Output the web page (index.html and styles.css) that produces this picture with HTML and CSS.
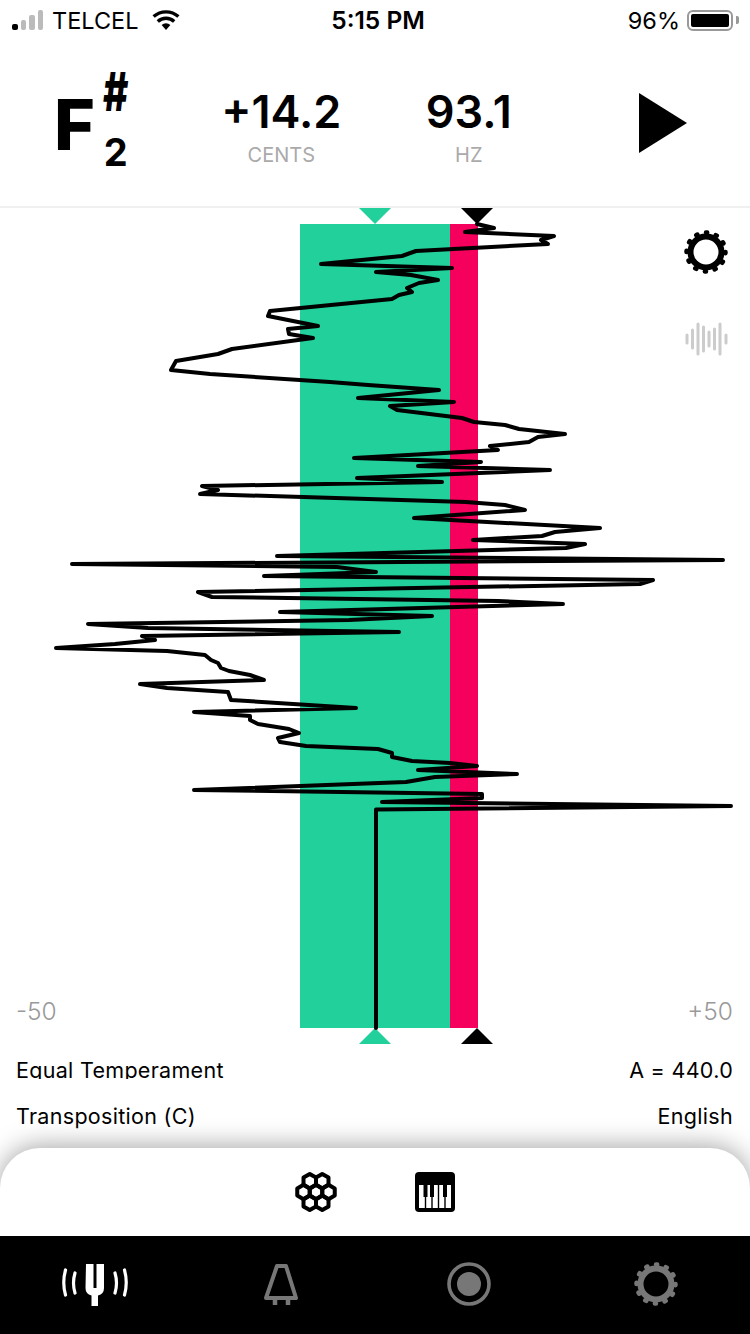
FILE: index.html
```html
<!DOCTYPE html>
<html lang="en">
<head>
    <meta charset="UTF-8">
    <title>Tuner</title>
    <link rel="stylesheet" href="styles.css">
</head>
<body>
    <svg class="defs" width="0" height="0">
        <symbol id="gear" viewBox="0 0 44 44">
            <circle cx="22" cy="22" r="15.5" fill="none" stroke="currentColor" stroke-width="6"/>
            <circle cx="22" cy="22" r="19.5" fill="none" stroke="currentColor" stroke-width="4.5" stroke-linecap="round" pathLength="12" stroke-dasharray="0.12 0.88"/>
        </symbol>
    </svg>
    <div class="app">
        <div class="status-bar">
            <div class="status-left">
                <div class="signal">
                    <span class="sig-bar on s1"></span>
                    <span class="sig-bar s2"></span>
                    <span class="sig-bar s3"></span>
                    <span class="sig-bar s4"></span>
                </div>
                <span class="carrier">TELCEL</span>
                <svg class="wifi" width="28" height="20" viewBox="0 0 28 20">
                    <path d="M14 20 9.6 15a6.6 6.6 0 0 1 8.8 0z" fill="#000"/>
                    <path d="M5.8 11.4a12.2 12.2 0 0 1 16.4 0M1.6 6.6a18.6 18.6 0 0 1 24.8 0" fill="none" stroke="#000" stroke-width="3.4"/>
                </svg>
            </div>
            <span class="clock">5:15 PM</span>
            <div class="status-right">
                <span class="percent">96%</span>
                <div class="battery"><div class="battery-fill"></div></div>
                <div class="battery-nub"></div>
            </div>
        </div>

        <div class="readout">
            <div class="note">
                <span class="note-name">F</span>
                <div class="note-marks">
                    <span class="note-sharp">#</span>
                    <span class="note-octave">2</span>
                </div>
            </div>
            <div class="stat">
                <span class="stat-value">+14.2</span>
                <span class="stat-label">CENTS</span>
            </div>
            <div class="stat">
                <span class="stat-value">93.1</span>
                <span class="stat-label">HZ</span>
            </div>
            <div class="play"></div>
        </div>

        <div class="chart">
            <svg class="chart-svg" width="750" height="836" viewBox="0 208 750 836">
                <rect x="300" y="224" width="150" height="804" fill="#21d09a"/>
                <rect x="450" y="224" width="28" height="804" fill="#f5005c"/>
                <polygon points="359,208 391,208 375,224" fill="#21d09a"/>
                <polygon points="461,208 493,208 477,224" fill="#000"/>
                <polygon points="375,1028 359,1044 391,1044" fill="#21d09a"/>
                <polygon points="477,1028 461,1044 493,1044" fill="#000"/>
                <polyline class="trace" points="376,1028 376,809.5 731,806 382,802 482,798 482,794 194,790 406,782 435,777 517,774 418,770 477,766 450,763 412,761 392,757 392,753 378,749 306,746 280,742 278,738 299,733 289,729 258,724 250,720 250,716 194,712 356,708 231,700 228,692 167,688 140,684 264,680 250,675 229,671 221,668 218,663 211,660 205,655 167,651 56,648 115,644 155,640 142,636 399,632 148,628 88,624 349,620 432,616 280,612 563,604 498,601 212,597 198,592 640,584 653,580 264,576 376,572 337,567 72,564 723,560 277,556 566,548 585,544 473,540 542,536 555,532 600,528 414,518 525,510 505,505 466,502 200,494 218,490 202,486 442,482 357,478 550,470 418,466 481,462 354,458 498,450 490,446 529,442 538,437 565,434 519,429 505,425 474,422 462,418 397,410 390,406 454,402 358,398 439,390 368,385 330,382 210,374 171,370 176,361 218,354 232,349 313,338 289,334 288,329 318,326 268,316 270,311 392,299 399,295 412,292 407,288 419,283 438,280 411,275 376,272 452,268 321,264 402,256 416,251 548,244 541,240 554,236 465,232 494,228 477,224"/>
            </svg>
            <svg class="chart-gear" width="44" height="44"><use href="#gear"/></svg>
            <svg class="chart-wave" width="44" height="36" viewBox="0 0 44 36">
                <g stroke="#ccc" stroke-width="3" stroke-linecap="round">
                    <line x1="2" y1="14" x2="2" y2="22"/>
                    <line x1="7.5" y1="9" x2="7.5" y2="27"/>
                    <line x1="13" y1="3" x2="13" y2="33"/>
                    <line x1="18.5" y1="6" x2="18.5" y2="30"/>
                    <line x1="24" y1="11" x2="24" y2="25"/>
                    <line x1="29.5" y1="8" x2="29.5" y2="28"/>
                    <line x1="35" y1="3" x2="35" y2="33"/>
                    <line x1="41" y1="14" x2="41" y2="22"/>
                </g>
            </svg>
            <span class="range range-min">-50</span>
            <span class="range range-max">+50</span>
        </div>

        <div class="info-rows">
            <div class="info-row clipped">
                <span>Equal Temperament</span>
                <span>A = 440.0</span>
            </div>
            <div class="info-row">
                <span>Transposition (C)</span>
                <span>English</span>
            </div>
        </div>

        <div class="tools">
            <svg width="44" height="44" viewBox="1 0 44 44">
                <g fill="none" stroke="#000" stroke-width="4" stroke-linejoin="round">
                    <polygon id="hex" points="22,14.8 28.25,18.4 28.25,25.6 22,29.2 15.75,25.6 15.75,18.4"/>
                    <use href="#hex" x="-12.5" y="0"/>
                    <use href="#hex" x="12.5" y="0"/>
                    <use href="#hex" x="-6.25" y="-10.8"/>
                    <use href="#hex" x="6.25" y="-10.8"/>
                    <use href="#hex" x="-6.25" y="10.8"/>
                    <use href="#hex" x="6.25" y="10.8"/>
                </g>
            </svg>
            <svg width="40" height="40" viewBox="0 0 40 40">
                <rect width="40" height="40" rx="4" fill="#000"/>
                <rect x="4" y="13" width="32" height="23" fill="#fff"/>
                <g stroke="#000" stroke-width="1.4">
                    <line x1="10.5" y1="13" x2="10.5" y2="36"/>
                    <line x1="17" y1="13" x2="17" y2="36"/>
                    <line x1="23.5" y1="13" x2="23.5" y2="36"/>
                    <line x1="30" y1="13" x2="30" y2="36"/>
                </g>
                <g stroke="#000" stroke-width="4">
                    <line x1="10.5" y1="13" x2="10.5" y2="25"/>
                    <line x1="17" y1="13" x2="17" y2="25"/>
                    <line x1="30" y1="13" x2="30" y2="25"/>
                </g>
            </svg>
        </div>

        <div class="tab-bar">
            <div class="tab">
                <svg width="68" height="44" viewBox="-1 0 68 44">
                    <path d="M25 2h7.500v24h3V2h7.500v24q0 6-6 7.500V44h-6.500V33.500q-6-1.500-6-7.500z" fill="#fff"/>
                    <path d="M4.500 8q-3.500 12.500 0 25M14 11q-3 10 0 20M54 11q3 10 0 20M63.500 8q3.500 12.500 0 25" fill="none" stroke="#fff" stroke-width="3.200" stroke-linecap="round"/>
                </svg>
            </div>
            <div class="tab">
                <svg width="36" height="44" viewBox="0 0 36 44" fill="none" stroke="#777">
                    <path d="M14 4h9l10 32H3z" stroke-width="4" stroke-linejoin="round"/>
                    <path d="M12 36v7M25 36v7" stroke-width="4.500"/>
                </svg>
            </div>
            <div class="tab">
                <svg width="44" height="44" viewBox="0 0 44 44">
                    <circle cx="22" cy="22" r="20" fill="none" stroke="#777" stroke-width="3.6"/>
                    <circle cx="22" cy="22" r="12" fill="#777"/>
                </svg>
            </div>
            <div class="tab tab-gear">
                <svg width="44" height="44"><use href="#gear"/></svg>
            </div>
        </div>
    </div>
</body>
</html>
```

FILE: styles.css
```css
body {
    margin: 0;
    background: #fff;
    font-family: Inter, "Liberation Sans", sans-serif;
    color: #000;
}
.defs {
    position: absolute;
}
.app {
    width: 750px;
    height: 1334px;
    display: flex;
    flex-direction: column;
    overflow: hidden;
}
.status-bar {
    height: 40px;
    flex: none;
    display: grid;
    grid-template-columns: 1fr auto 1fr;
    align-items: center;
    font-size: 23.500px;
    padding: 0 11px 0 12px;
}
.status-left {
    display: flex;
    align-items: center;
}
.signal {
    display: flex;
    align-items: flex-end;
    gap: 3px;
    height: 20px;
}
.sig-bar {
    width: 5.5px;
    background: #bbb;
    border-radius: 2px;
}
.sig-bar.on {
    background: #000;
}
.s1 { height: 6px; }
.s2 { height: 10px; }
.s3 { height: 15px; }
.s4 { height: 20px; }
.carrier {
    margin-left: 9px;
    margin-right: 13px;
}
.clock {
    font-weight: 600;
    font-size: 24.500px;
    margin-left: 5px;
}
.status-right {
    display: flex;
    align-items: center;
    justify-content: flex-end;
}
.percent {
    margin-right: 7px;
}
.battery {
    width: 46px;
    height: 21px;
    box-sizing: border-box;
    border: 2px solid #999;
    border-radius: 6px;
    padding: 2px;
}
.battery-fill {
    height: 100%;
    background: #000;
    border-radius: 2px;
}
.battery-nub {
    width: 3px;
    height: 8px;
    background: #999;
    margin-left: 3px;
    border-radius: 0 2px 2px 0;
}

.readout {
    height: 168px;
    flex: none;
    box-sizing: border-box;
    display: grid;
    grid-template-columns: repeat(4, 187.5px);
    justify-items: center;
    align-items: center;
    border-bottom: 2px solid #f0f0f0;
}
.note {
    display: flex;
    align-items: center;
    gap: 3px;
    margin-top: -6px;
}
.note-name {
    font-weight: 800;
    font-size: 70px;
    line-height: 1;
    margin-top: 10px;
}
.note-marks {
    display: flex;
    flex-direction: column;
    align-items: center;
    gap: 24px;
}
.note-sharp {
    font-weight: 800;
    font-size: 54px;
    line-height: 40px;
    transform: scaleX(0.72);
}
.note-octave {
    font-weight: 700;
    font-size: 38px;
    line-height: 32px;
}
.stat {
    display: flex;
    flex-direction: column;
    align-items: center;
    margin-top: 7px;
}
.stat-value {
    font-size: 45px;
    font-weight: 600;
    line-height: 52px;
}
.stat-label {
    font-size: 20px;
    line-height: 24px;
    margin-top: 5px;
    color: #aaa;
}
.play {
    width: 0;
    height: 0;
    margin-left: 14px;
    border-style: solid;
    border-width: 30px 0 30px 48px;
    border-color: transparent transparent transparent #000;
}

.chart {
    height: 836px;
    flex: none;
    position: relative;
}
.chart-svg {
    display: block;
}
.trace {
    fill: none;
    stroke: #000;
    stroke-width: 4;
    stroke-linecap: round;
    stroke-linejoin: round;
}
.chart-gear {
    position: absolute;
    left: 684px;
    top: 22px;
}
.chart-wave {
    position: absolute;
    left: 685px;
    top: 113px;
}
.range {
    position: absolute;
    bottom: 18px;
    font-size: 24.500px;
    font-weight: 300;
    color: #999;
}
.range-min {
    left: 16px;
}
.range-max {
    right: 17px;
}

.info-rows {
    flex: 1;
    padding: 0 17px 0 16px;
    display: flex;
    flex-direction: column;
    font-size: 21.500px;
    letter-spacing: 0.3px;
}
.info-row {
    display: flex;
    justify-content: space-between;
    align-items: center;
    height: 46px;
}
.info-row.clipped {
    height: 35px;
    margin-bottom: 21px;
    padding-top: 17px;
    box-sizing: border-box;
    overflow: hidden;
}
.info-rows .info-row:last-child {
    margin-top: -7px;
}

.tools {
    height: 88px;
    flex: none;
    display: flex;
    justify-content: center;
    align-items: center;
    gap: 76px;
    background: #fff;
    border-radius: 40px 40px 0 0;
    box-shadow: 0 -2px 26px rgba(0,0,0,0.36);
    position: relative;
}
.tab-bar {
    height: 98px;
    flex: none;
    display: grid;
    grid-template-columns: repeat(4, 187.5px);
    background: #000;
    position: relative;
}
.tab {
    display: flex;
    justify-content: center;
    align-items: center;
    padding-bottom: 2px;
}
.tab-gear {
    color: #777;
}
```
